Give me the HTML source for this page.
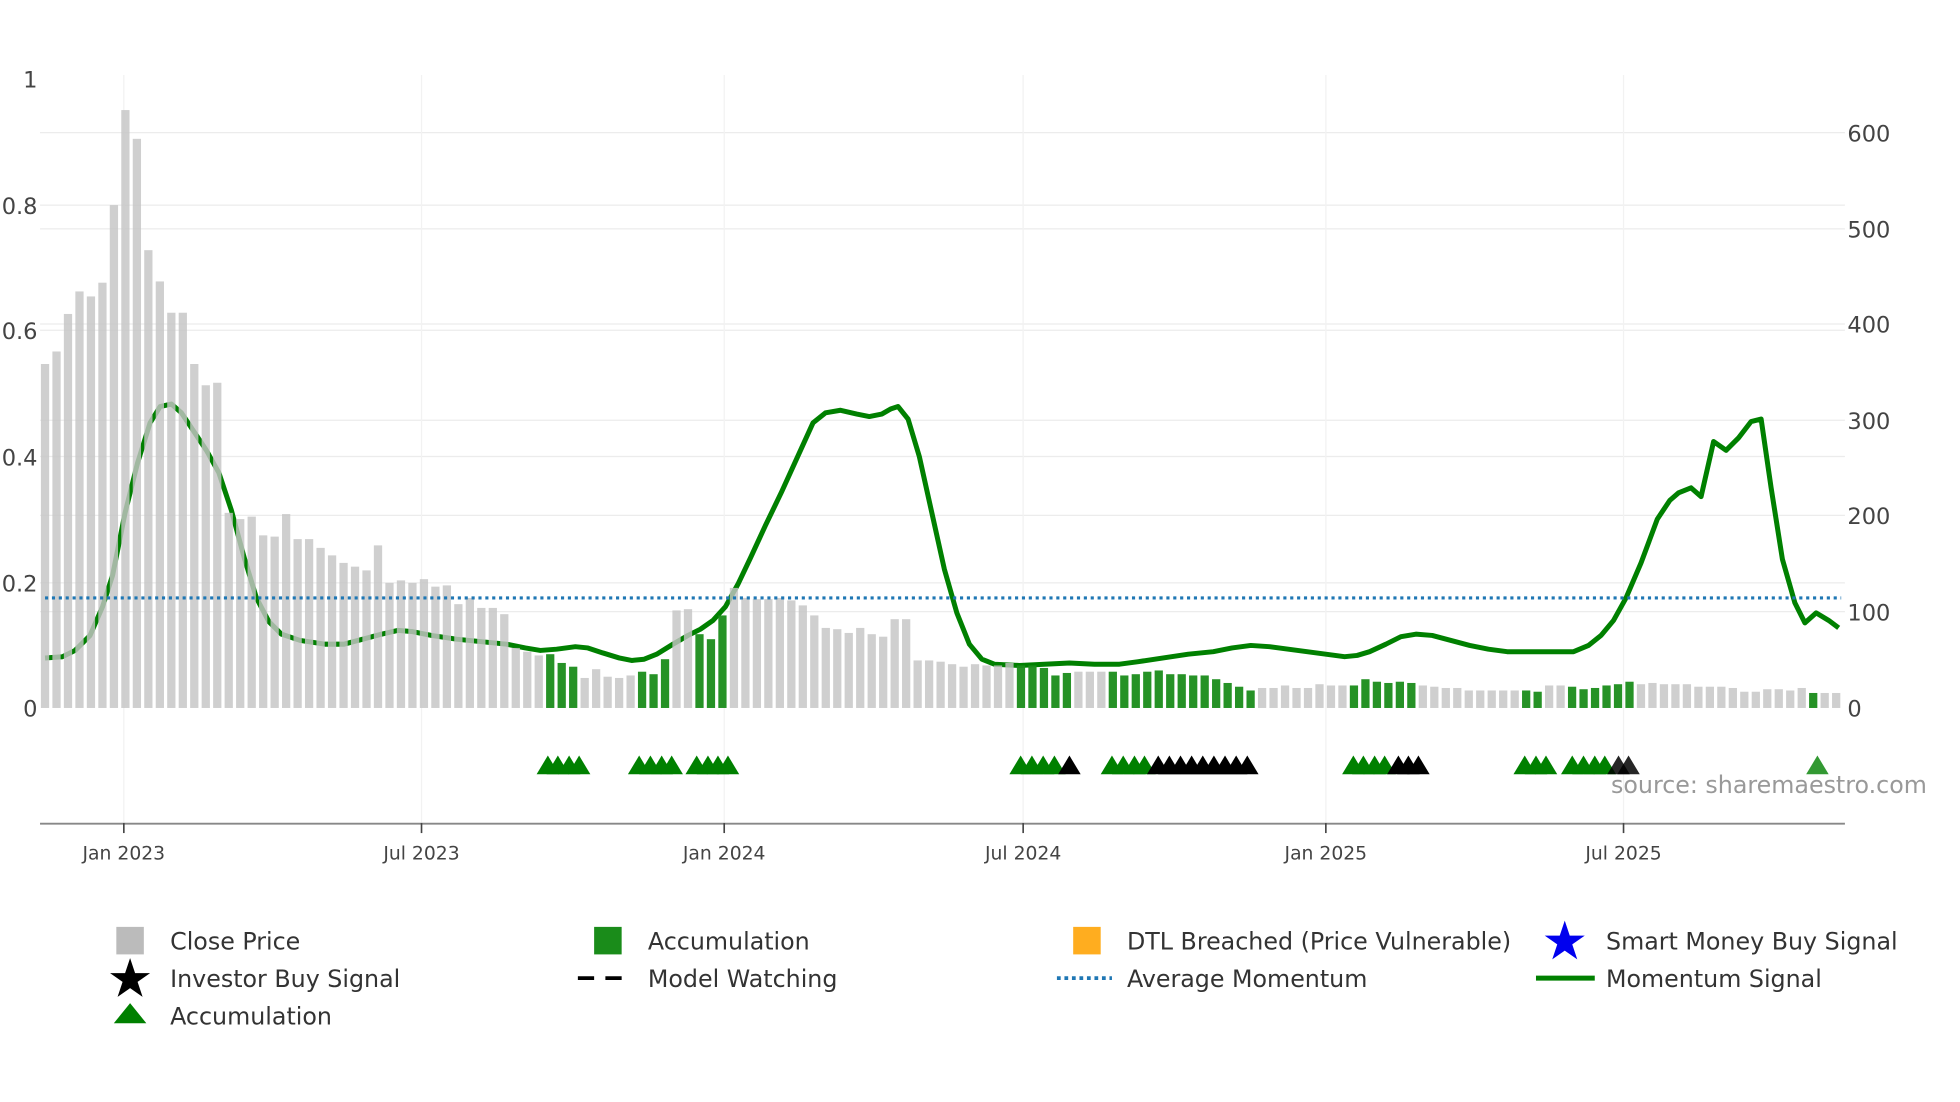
<!DOCTYPE html>
<html><head><meta charset="utf-8"><style>
html,body{margin:0;padding:0;background:#fff;width:1960px;height:1102px;overflow:hidden}
svg{display:block}
text{font-family:"DejaVu Sans","Liberation Sans",sans-serif}
</style></head><body>
<svg id="s" width="1960" height="1102" viewBox="0 0 1567 881" preserveAspectRatio="none" xmlns="http://www.w3.org/2000/svg">
<g stroke="#ececec" stroke-width="1">
<line x1="32" x2="1475" y1="106" y2="106"/><line x1="32" x2="1475" y1="183" y2="183"/><line x1="32" x2="1475" y1="259" y2="259"/><line x1="32" x2="1475" y1="336" y2="336"/><line x1="32" x2="1475" y1="412" y2="412"/><line x1="32" x2="1475" y1="489" y2="489"/>
<line x1="32" x2="1475" y1="164" y2="164"/><line x1="32" x2="1475" y1="264" y2="264"/><line x1="32" x2="1475" y1="365" y2="365"/><line x1="32" x2="1475" y1="466" y2="466"/>
</g>
<g stroke="#f2f2f2" stroke-width="1">
<line x1="99" x2="99" y1="60" y2="658"/><line x1="337" x2="337" y1="60" y2="658"/><line x1="579" x2="579" y1="60" y2="658"/><line x1="818" x2="818" y1="60" y2="658"/><line x1="1060" x2="1060" y1="60" y2="658"/><line x1="1298" x2="1298" y1="60" y2="658"/>
</g>
<polyline id="mom" fill="none" stroke="#008000" stroke-width="4" stroke-linejoin="round"/>
<g id="bars"></g>
<line x1="36" x2="1472" y1="478" y2="478" stroke="#1f77b4" stroke-width="2.5" stroke-dasharray="2.5,3"/>
<g id="tri"></g>
<line x1="32" x2="1475" y1="658.5" y2="658.5" stroke="#888" stroke-width="1.5"/>
<g stroke="#444" stroke-width="1.3"><line x1="99" x2="99" y1="658" y2="666"/><line x1="337" x2="337" y1="658" y2="666"/><line x1="579" x2="579" y1="658" y2="666"/><line x1="818" x2="818" y1="658" y2="666"/><line x1="1060" x2="1060" y1="658" y2="666"/><line x1="1298" x2="1298" y1="658" y2="666"/></g>
<g fill="#444" font-size="15" text-anchor="middle">
<text x="99" y="687">Jan 2023</text><text x="337" y="687">Jul 2023</text><text x="579" y="687">Jan 2024</text><text x="818" y="687">Jul 2024</text><text x="1060" y="687">Jan 2025</text><text x="1298" y="687">Jul 2025</text>
</g>
<g fill="#444" font-size="18" text-anchor="end">
<text x="30" y="70">1</text><text x="30" y="171">0.8</text><text x="30" y="271">0.6</text><text x="30" y="372">0.4</text><text x="30" y="473">0.2</text><text x="30" y="573">0</text>
</g>
<g fill="#444" font-size="18">
<text x="1477" y="113">600</text><text x="1477" y="190">500</text><text x="1477" y="266">400</text><text x="1477" y="343">300</text><text x="1477" y="419">200</text><text x="1477" y="496">100</text><text x="1477" y="573">0</text>
</g>
<text x="1288" y="634" fill="#999" font-size="19">source: sharemaestro.com</text>
<g font-size="19" fill="#333">
<rect x="93" y="741" width="22" height="22" fill="#bbb"/><text x="136" y="759">Close Price</text>
<rect x="475" y="741" width="22" height="22" fill="#1a8c1a"/><text x="518" y="759">Accumulation</text>
<rect x="858" y="741" width="22" height="22" fill="#ffad1f"/><text x="901" y="759">DTL Breached (Price Vulnerable)</text>
<polygon points="1251,736 1255,748 1267,748 1257,755 1261,767 1251,760 1241,767 1245,755 1235,748 1247,748" fill="#0000ee"/><text x="1284" y="759">Smart Money Buy Signal</text>
<polygon points="104,766 108,778 120,778 110,785 114,797 104,790 94,797 98,785 88,778 100,778" fill="#000"/><text x="136" y="789">Investor Buy Signal</text>
<line x1="462" x2="506" y1="782" y2="782" stroke="#000" stroke-width="3" stroke-dasharray="13,9"/><text x="518" y="789">Model Watching</text>
<line x1="845" x2="889" y1="782" y2="782" stroke="#1f77b4" stroke-width="3" stroke-dasharray="3,3"/><text x="901" y="789">Average Momentum</text>
<line x1="1228" x2="1275" y1="782" y2="782" stroke="#008000" stroke-width="4"/><text x="1284" y="789">Momentum Signal</text>
<polygon points="104,802 117,818 91,818" fill="#008000"/><text x="136" y="819">Accumulation</text>
</g>
</svg>
<script>
var NS="http://www.w3.org/2000/svg";
var T=[291,281,251,233,237,226,164,88,111,200,225,250,250,291,308,306,410,415,413,428,429,411,431,431,438,444,450,453,456,436,466,464,466,463,469,468,483,478,486,486,491,518,521,524,523,530,533,542,535,541,542,540,537,539,527,488,487,507,511,492,470,478,479,479,478,480,484,492,502,503,506,502,507,509,495,495,528,528,529,531,533,531,532,532,530,532,532,534,540,538,537,537,537,537,540,539,537,536,539,539,540,540,543,546,549,552,550,550,548,550,550,547,548,548,548,543,545,546,545,546,548,549,550,550,552,552,552,552,552,552,553,548,548,549,551,550,548,547,545,547,546,547,547,547,549,549,549,550,553,553,551,551,552,550,554,554,554];
var G={44:1,45:1,46:1,52:1,53:1,54:1,57:1,58:1,59:1};
for(var i=85;i<=89;i++)G[i]=1;for(i=93;i<=105;i++)G[i]=1;for(i=114;i<=119;i++)G[i]=1;G[129]=1;G[130]=1;for(i=133;i<=138;i++)G[i]=1;G[154]=1;
var b=document.getElementById("bars"),dx=(1468-36)/(T.length-1);
T.forEach(function(t,i){var r=document.createElementNS(NS,"rect");var x=36+i*dx;r.setAttribute("x",x-3.3);r.setAttribute("width",6.6);r.setAttribute("y",t);r.setAttribute("height",566-t);r.setAttribute("fill",G[i]?"#1a8c1a":"#c4c4c4");r.setAttribute("fill-opacity",G[i]?"0.95":"0.82");b.appendChild(r);});
var P="36,526 50,525 60,520 72,508 82,485 90,460 100,410 110,370 120,338 128,325 137,323 145,330 155,345 165,360 175,378 185,408 195,445 205,478 215,497 225,507 240,512 260,515 275,515 290,511 305,507 318,504 330,505 345,508 365,511 385,513 405,515 420,518 432,520 445,519 460,517 470,518 482,522 495,526 505,528 515,527 525,523 538,515 550,508 560,503 570,496 580,485 590,467 600,446 612,420 625,393 640,360 650,338 660,330 672,328 685,331 695,333 705,331 712,327 718,325 726,335 735,365 745,410 755,455 765,490 775,515 785,527 795,531 815,532 835,531 855,530 875,531 895,531 910,529 930,526 950,523 970,521 985,518 1000,516 1015,517 1030,519 1045,521 1060,523 1075,525 1085,524 1095,521 1108,515 1120,509 1132,507 1145,508 1160,512 1175,516 1190,519 1205,521 1225,521 1245,521 1258,521 1270,516 1280,508 1290,496 1300,478 1312,450 1325,415 1335,400 1342,394 1352,390 1360,397 1370,353 1380,360 1390,350 1400,337 1408,335 1416,390 1425,447 1435,482 1443,498 1452,490 1462,496 1470,502";
document.getElementById("mom").setAttribute("points",P);
var tri=document.getElementById("tri");
function tr(x,c,o){var p=document.createElementNS(NS,"polygon");p.setAttribute("points",(x)+",604 "+(x+9)+",619 "+(x-9)+",619");p.setAttribute("fill",c);if(o)p.setAttribute("fill-opacity",o);tri.appendChild(p);}
[[438,"g"],[446,"g"],[455,"g"],[463,"g"],[511,"g"],[520,"g"],[529,"g"],[537,"g"],[557,"g"],[566,"g"],[574,"g"],[582,"g"],[816,"g"],[825,"g"],[834,"g"],[843,"g"],[855,"k"],[889,"g"],[898,"g"],[907,"g"],[915,"g"]].forEach(function(a){tr(a[0],a[1]=="g"?"#008000":"#000");});
for(var x=926;x<=1006;x+=8.9)tr(x,"#000");
[1082,1090,1099,1107].forEach(function(x){tr(x,"#008000")});[1118,1126,1134].forEach(function(x){tr(x,"#000")});
[1219,1228,1236].forEach(function(x){tr(x,"#008000")});[1257,1266,1275,1283].forEach(function(x){tr(x,"#008000")});
tr(1294,"#000",0.85);tr(1302,"#000",0.85);tr(1453,"#008000",0.8);
</script>
</body></html>
